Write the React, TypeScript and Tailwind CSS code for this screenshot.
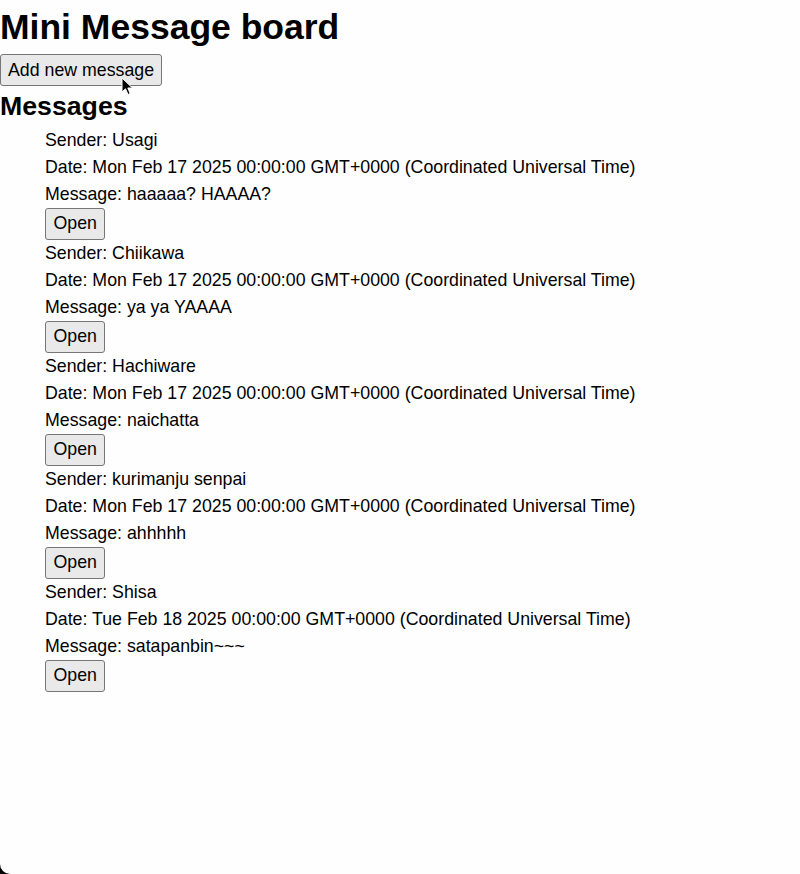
const MESSAGES = [
  { sender: "Usagi", date: "Mon Feb 17 2025 00:00:00 GMT+0000 (Coordinated Universal Time)", text: "haaaaa? HAAAA?" },
  { sender: "Chiikawa", date: "Mon Feb 17 2025 00:00:00 GMT+0000 (Coordinated Universal Time)", text: "ya ya YAAAA" },
  { sender: "Hachiware", date: "Mon Feb 17 2025 00:00:00 GMT+0000 (Coordinated Universal Time)", text: "naichatta" },
  { sender: "kurimanju senpai", date: "Mon Feb 17 2025 00:00:00 GMT+0000 (Coordinated Universal Time)", text: "ahhhhh" },
  { sender: "Shisa", date: "Tue Feb 18 2025 00:00:00 GMT+0000 (Coordinated Universal Time)", text: "satapanbin~~~" },
];

const btn =
  "h-[32px] rounded-[3px] border border-[#767676] bg-[#e9e9e9] text-[17.75px] leading-[27px] text-black";

export default function App() {
  return (
    <div className="relative min-h-screen overflow-hidden bg-[#fefefe] text-black font-['Liberation_Sans',Arial,sans-serif]">
      <h1 className="text-[35.5px] font-bold leading-[54px]">Mini Message board</h1>
      <button className={btn + " px-[7px]"}>Add new message</button>
      <h2 className="text-[26.7px] font-bold leading-[40.5px]">Messages</h2>
      <ul className="pl-[45px]">
        {MESSAGES.map((m) => (
          <li key={m.sender} className="text-[17.75px] leading-[27px]">
            <div>Sender: {m.sender}</div>
            <div>Date: {m.date}</div>
            <div>Message: {m.text}</div>
            <button className={btn + " px-[7.5px]"}>Open</button>
          </li>
        ))}
      </ul>

      {/* mouse pointer */}
      <svg className="absolute left-[121px] top-[77px]" width="13" height="19" viewBox="0 0 13 19" aria-hidden>
        <path d="M1 1 L1 15 L4.5 11.8 L7 17.5 L9.2 16.5 L6.8 11 L11.5 11 Z" fill="#000" stroke="#fff" strokeWidth="1" strokeLinejoin="round" />
      </svg>

      {/* screen corner */}
      <div className="absolute bottom-0 left-0 h-[10px] w-[10px] bg-black">
        <div className="h-full w-full rounded-bl-[10px] bg-[#fefefe]" />
      </div>
    </div>
  );
}
